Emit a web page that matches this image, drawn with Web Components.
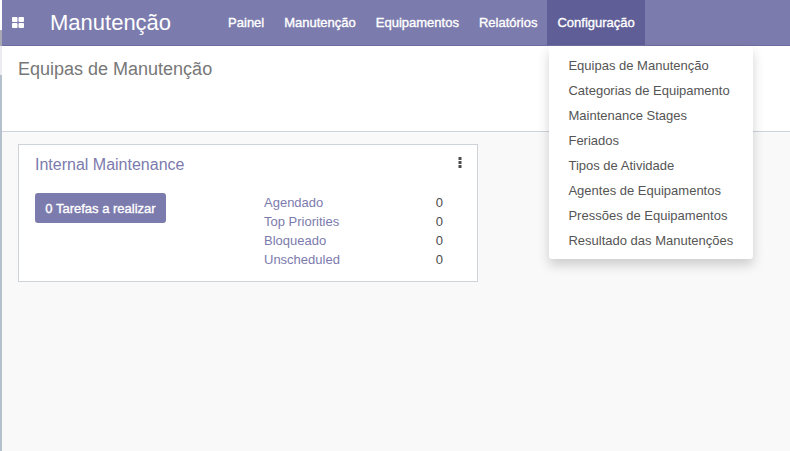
<!DOCTYPE html>
<html lang="pt">
<head>
<meta charset="utf-8">
<title>Manutenção</title>
<style>
  html, body { margin: 0; height: 100%; }
  body { font-family: "Liberation Sans", Arial, sans-serif; overflow: hidden; }
</style>
</head>
<body>
<app-shell>
  <top-nav slot="nav" brand="Manutenção">
    <nav-item>Painel</nav-item>
    <nav-item>Manutenção</nav-item>
    <nav-item>Equipamentos</nav-item>
    <nav-item>Relatórios</nav-item>
    <nav-item open>Configuração
      <drop-menu slot="menu">
        <span>Equipas de Manutenção</span>
        <span>Categorias de Equipamento</span>
        <span>Maintenance Stages</span>
        <span>Feriados</span>
        <span>Tipos de Atividade</span>
        <span>Agentes de Equipamentos</span>
        <span>Pressões de Equipamentos</span>
        <span>Resultado das Manutenções</span>
      </drop-menu>
    </nav-item>
  </top-nav>
  <control-panel slot="panel">Equipas de Manutenção</control-panel>
  <team-card title="Internal Maintenance" action="0 Tarefas a realizar">
    <stat-row label="Agendado" value="0"></stat-row>
    <stat-row label="Top Priorities" value="0"></stat-row>
    <stat-row label="Bloqueado" value="0"></stat-row>
    <stat-row label="Unscheduled" value="0"></stat-row>
  </team-card>
</app-shell>

<script>
class AppShell extends HTMLElement {
  constructor() {
    super();
    this.attachShadow({ mode: "open" });
    this.shadowRoot.innerHTML = `
      <style>
        :host {
          display: flex; flex-direction: column; height: 451px; padding-left: 2px; box-sizing: border-box;
          background: #f9f9f9 linear-gradient(180deg, #fff 0 30px, #a9a9b5 30px 46px, #ececf0 46px 75px, #b4c0cc 75px) no-repeat 0 0 / 2px 100%;
        }
        main { padding: 12px 16px; }
      </style>
      <slot name="nav"></slot>
      <slot name="panel"></slot>
      <main><slot></slot></main>
    `;
  }
}

class TopNav extends HTMLElement {
  constructor() {
    super();
    this.attachShadow({ mode: "open" });
  }

  connectedCallback() {
    const brand = this.getAttribute("brand") || "";
    this.shadowRoot.innerHTML = `
      <style>
        :host { display: flex; align-items: stretch; height: 46px; box-sizing: border-box; }
        .bar { flex: 1; display: flex; align-items: stretch; background: #7c7bad; border-bottom: 1px solid #6f6ea0; color: #fff; }
        svg { margin: 17px 0 0 10px; }
        .brand { font-size: 22px; line-height: 45px; margin-left: 26px; margin-right: 47px; }
        nav { display: flex; }
      </style>
      <div class="bar">
        <svg width="12" height="11" viewBox="0 0 12 11" fill="#fff">
          <rect x="0" y="0" width="5.5" height="5" rx="1"/>
          <rect x="6.5" y="0" width="5.5" height="5" rx="1"/>
          <rect x="0" y="6" width="5.5" height="5" rx="1"/>
          <rect x="6.5" y="6" width="5.5" height="5" rx="1"/>
        </svg>
        <span class="brand">${brand}</span>
        <nav><slot></slot></nav>
      </div>
    `;
  }
}

class NavItem extends HTMLElement {
  constructor() {
    super();
    this.attachShadow({ mode: "open" });
    this.shadowRoot.innerHTML = `
      <style>
        :host { display: block; position: relative; padding: 0 10px; font-size: 13px; font-weight: 400; -webkit-text-stroke: 0.35px #fff; line-height: 45px; color: #fff; white-space: nowrap; }
        :host([open]) { background: #5f5e97; }
      </style>
      <slot></slot>
      <slot name="menu"></slot>
    `;
  }
}

class DropMenu extends HTMLElement {
  constructor() {
    super();
    this.attachShadow({ mode: "open" });
    this.shadowRoot.innerHTML = `
      <style>
        :host { position: absolute; left: 1.5px; top: 46px; width: 204px; box-sizing: border-box; display: flex; flex-direction: column; padding: 7px 0 6px; background: #fff; border-radius: 3px; box-shadow: 0 6px 12px rgba(0,0,0,.18); font-size: 13px; font-weight: 400; -webkit-text-stroke: 0; color: #555; z-index: 5; }
        ::slotted(span) { display: block; padding: 0 19.5px; line-height: 25px; }
      </style>
      <slot></slot>
    `;
  }
}

class ControlPanel extends HTMLElement {
  constructor() {
    super();
    this.attachShadow({ mode: "open" });
    this.shadowRoot.innerHTML = `
      <style>
        :host { display: block; height: 86px; box-sizing: border-box; padding: 13px 16px; background: #fff; border-bottom: 1px solid #ced4da; font-size: 18px; line-height: 20px; color: #777; }
      </style>
      <slot></slot>
    `;
  }
}

class TeamCard extends HTMLElement {
  constructor() {
    super();
    this.attachShadow({ mode: "open" });
  }

  connectedCallback() {
    const title = this.getAttribute("title") || "";
    const action = this.getAttribute("action") || "";
    this.shadowRoot.innerHTML = `
      <style>
        :host { display: block; position: relative; width: 460px; height: 138px; box-sizing: border-box; padding: 10px 16px; background: #fff; border: 1px solid #ced4da; }
        h3 { margin: 0; font-size: 16px; font-weight: 400; line-height: 20px; color: #7c7bad; }
        .body { display: flex; margin-top: 18px; }
        button { width: 131px; height: 30px; padding: 0; border: 0; border-radius: 3px; background: #7c7bad; color: #fff; font: 400 13px "Liberation Sans", Arial, sans-serif; -webkit-text-stroke: 0.35px #fff; }
        .stats { margin-left: 98px; width: 179px; }
        .more { position: absolute; right: 15px; top: 12px; }
      </style>
      <h3>${title}</h3>
      <svg class="more" width="4" height="11" viewBox="0 0 4 11" fill="#4c4c4c">
        <rect x="0.5" y="0" width="3" height="3"/><rect x="0.5" y="4" width="3" height="3"/><rect x="0.5" y="8" width="3" height="3"/>
      </svg>
      <div class="body">
        <button>${action}</button>
        <div class="stats"><slot></slot></div>
      </div>
    `;
  }
}

class StatRow extends HTMLElement {
  constructor() {
    super();
    this.attachShadow({ mode: "open" });
  }

  connectedCallback() {
    this.shadowRoot.innerHTML = `
      <style>
        :host { display: flex; justify-content: space-between; font-size: 13px; line-height: 19px; }
        .label { color: #7c7bad; }
        .value { color: #4c4c4c; }
      </style>
      <span class="label">${this.getAttribute("label")}</span>
      <span class="value">${this.getAttribute("value")}</span>
    `;
  }
}

customElements.define("app-shell", AppShell);
customElements.define("top-nav", TopNav);
customElements.define("nav-item", NavItem);
customElements.define("drop-menu", DropMenu);
customElements.define("control-panel", ControlPanel);
customElements.define("team-card", TeamCard);
customElements.define("stat-row", StatRow);
</script>
</body>
</html>
